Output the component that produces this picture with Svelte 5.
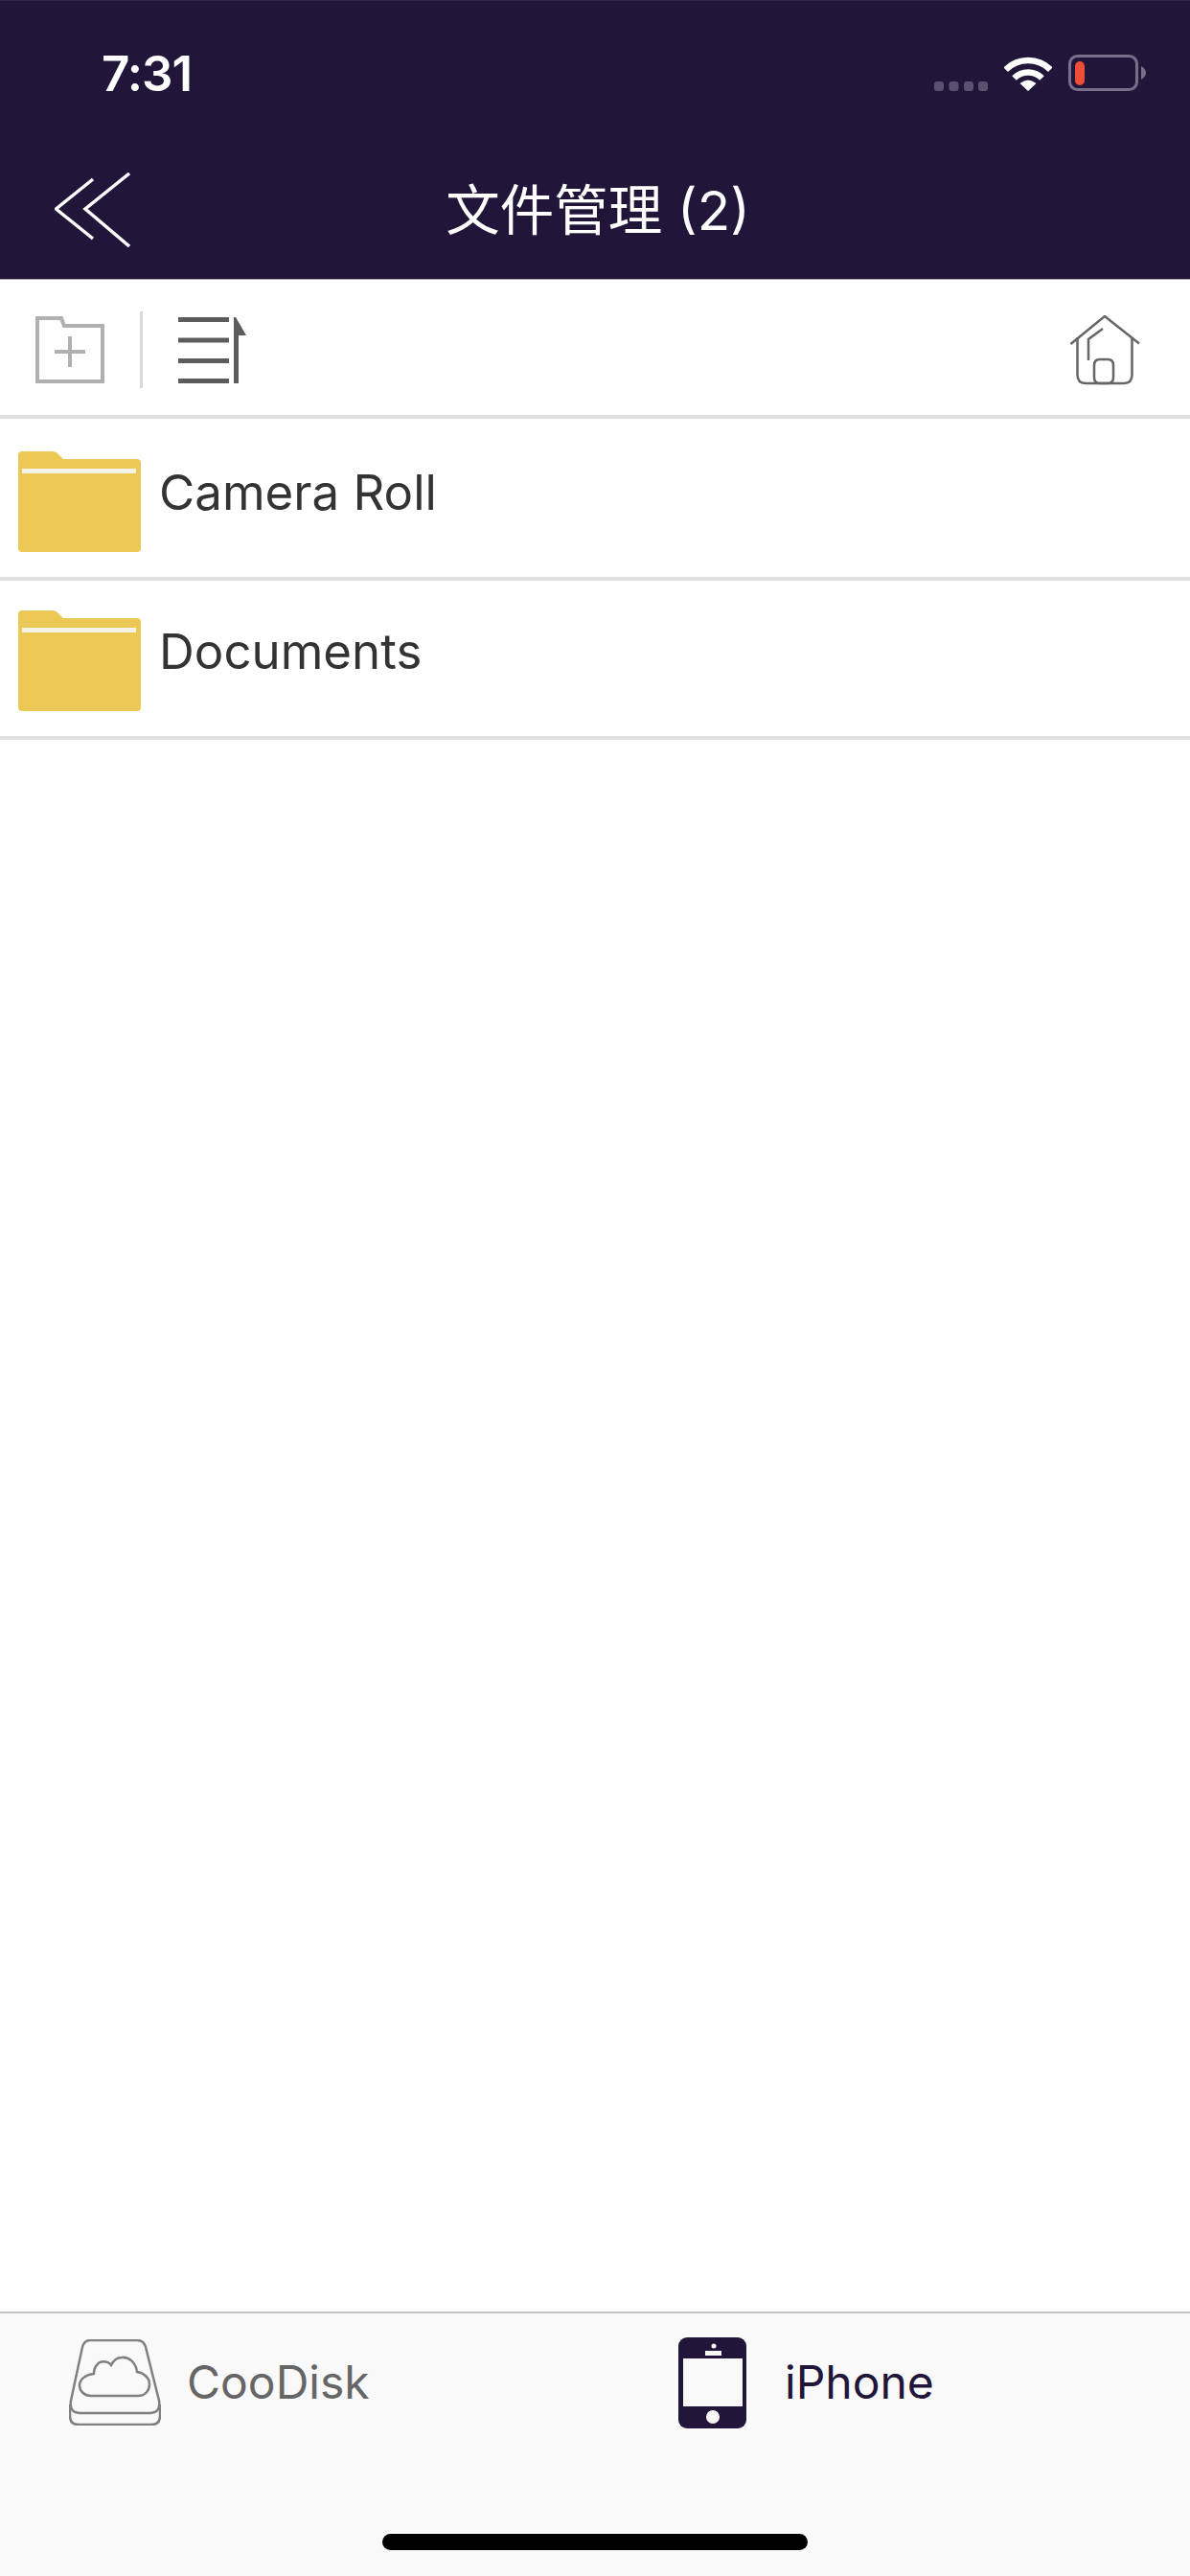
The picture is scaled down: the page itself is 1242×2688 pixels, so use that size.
<script>
    const folders = ['Camera Roll', 'Documents'];
</script>

<div class="screen">
    <!-- Dark header: status bar + nav -->
    <header class="header">
        <div class="status">
            <span class="time">7:31</span>
            <div class="status-icons">
                <svg class="dots" width="56" height="10" viewBox="0 0 56 10">
                    <rect x="0" width="10" height="10" rx="3" />
                    <rect x="15.500" width="10" height="10" rx="3" />
                    <rect x="31" width="10" height="10" rx="3" />
                    <rect x="46" width="10" height="10" rx="3" />
                </svg>
                <svg class="wifi" width="50" height="37" viewBox="0 0 50 37">
                    <path d="M1.700 14.700A33 33 0 0 1 48.300 14.700" fill="none" stroke="#fff" stroke-width="6.500" />
                    <path d="M10.500 23.500A20.500 20.500 0 0 1 39.500 23.500" fill="none" stroke="#fff" stroke-width="6.500" />
                    <path d="M25 37L16.500 29Q25 22 33.500 29Z" fill="#fff" />
                </svg>
                <svg width="81" height="38" viewBox="0 0 81 38">
                    <rect x="1.500" y="1.500" width="70" height="35" rx="8" fill="none" stroke="#77708a" stroke-width="3" />
                    <rect x="7" y="7" width="10" height="25" rx="5" fill="#ee4d38" />
                    <path d="M76 12Q81 15 81 19Q81 23 76 26Z" fill="#77708a" />
                </svg>
            </div>
        </div>
        <div class="nav">
            <svg class="back" width="80" height="78" viewBox="0 0 80 78">
                <path d="M40 7L1.500 38L40 69M78 1L32 38L78 77" fill="none" stroke="#fff" stroke-width="3.500" />
            </svg>
            <h1>文件管理 (2)</h1>
            <span></span>
        </div>
    </header>

    <!-- Toolbar -->
    <div class="toolbar">
        <svg width="72" height="70" viewBox="0 0 72 70">
            <path d="M2 2H27L30 10H70V68H2Z" fill="none" stroke="#b0b0b0" stroke-width="4" />
            <path d="M20 37H52M36 21V53" fill="none" stroke="#b0b0b0" stroke-width="4" />
        </svg>
        <div class="divider"></div>
        <svg width="71" height="69" viewBox="0 0 71 69">
            <path d="M0 2.500H53M0 24H53M0 45.500H53M0 66.500H53" fill="none" stroke="#5c5c5c" stroke-width="5" />
            <path d="M58 69V0H60L71 19H63V69Z" fill="#5c5c5c" />
        </svg>
        <svg class="home" width="73" height="73" viewBox="0 0 73 73">
            <g fill="none" stroke="#666" stroke-width="2.500">
                <path d="M0.500 30L36 1L72 29.500" />
                <path d="M7.500 23V62Q7.500 71 16 71H56Q64.500 71 64.500 62V23" />
                <path d="M34 14L19 25V47" />
                <path d="M25 65V52Q25 46 31 46H39Q45 46 45 52V65Q45 71 39 71H31Q25 71 25 65Z" />
            </g>
        </svg>
    </div>

    <!-- Folder list -->
    <ul class="list">
        {#each folders as name}
            <li class="row">
                <svg class="folder" width="128" height="105" viewBox="0 0 128 105">
                    <path d="M4 0H36Q39 0 41 2L47 8H124Q128 8 128 12V101Q128 105 124 105H4Q0 105 0 101V4Q0 0 4 0Z" fill="#ecc954" />
                    <rect x="4" y="18" width="119" height="5" fill="#f6f3e8" />
                </svg>
                <span class="name">{name}</span>
            </li>
        {/each}
    </ul>

    <!-- Bottom tabs -->
    <footer class="tabbar">
        <div class="tabs">
            <div class="tab tab-disk">
                <svg width="96" height="90" viewBox="0 0 96 90">
                    <g fill="none" stroke="#808080" stroke-width="2.500">
                        <path d="M22 1H71Q78 1 80 8L94 64Q96 77 84 77H12Q0 77 2 64L14 8Q16 1 22 1Z" />
                        <path d="M1 68V80Q1 89 10 89H86Q95 89 95 80V68" />
                        <path d="M23 59H72C80 59 84 53 84 47C84 40 78 35 71 34C70 24 62 18 55 19C50 19 46 23 44 27C40 22 32 22 29 27C26 30 26 33 26 36C17 37 11 42 11 48C11 54 16 59 23 59Z" />
                    </g>
                </svg>
                <span class="tab-label">CooDisk</span>
            </div>
            <div class="tab tab-phone">
                <svg width="71" height="95" viewBox="0 0 71 95">
                    <rect width="71" height="95" rx="9" fill="#21163a" />
                    <rect x="5" y="22" width="62" height="50" fill="#f9f9f9" />
                    <rect x="28" y="14" width="17" height="5" fill="#f9f9f9" />
                    <circle cx="37" cy="9" r="2.500" fill="#f9f9f9" />
                    <circle cx="36" cy="83" r="7" fill="#f9f9f9" />
                </svg>
                <span class="tab-label active">iPhone</span>
            </div>
        </div>
        <div class="home-bar"></div>
    </footer>
</div>

<style>
    :global(body) {
        margin: 0;
        background: #fff;
        font-family: Inter, "Noto Sans CJK SC", "Liberation Sans", sans-serif;
    }

    .screen {
        width: 1242px;
        height: 2688px;
        display: flex;
        flex-direction: column;
        overflow: hidden;
    }

    /* Header */
    .header {
        height: 290px;
        flex: none;
        background: #21163a;
        border-top: 1px solid #2f2548;
        border-bottom: 1px solid #a9a6b0;
        color: #fff;
    }

    .status {
        height: 150px;
        box-sizing: border-box;
        display: flex;
        align-items: center;
        justify-content: space-between;
        padding: 0 46px 0 106px;
    }

    .time {
        font-size: 51px;
        font-weight: 600;
        letter-spacing: -1px;
    }

    .status-icons {
        display: flex;
        align-items: center;
    }

    .dots {
        fill: #5a516e;
        margin: 27px 17px 0 0;
    }

    .wifi {
        margin-right: 17px;
    }

    .nav {
        height: 139px;
        display: grid;
        grid-template-columns: 1fr auto 1fr;
        align-items: center;
    }

    .back {
        margin: -4px 0 0 57px;
    }

    h1 {
        margin: -2px 0 0;
        padding-left: 6px;
        font-size: 56.5px;
        font-weight: 400;
        line-height: 1.2;
    }

    /* Toolbar */
    .toolbar {
        height: 145px;
        flex: none;
        box-sizing: border-box;
        display: flex;
        align-items: center;
        padding: 5px 52px 0 37px;
        border-bottom: 4px solid #e0e0e0;
    }

    .divider {
        width: 3px;
        height: 80px;
        background: #d8d8d8;
        margin: 0 37px;
    }

    .home {
        margin-left: auto;
    }

    /* List */
    .list {
        flex: 1;
        margin: 0;
        padding: 0;
        list-style: none;
    }

    .row {
        height: 166px;
        box-sizing: border-box;
        display: flex;
        align-items: flex-start;
        padding: 31px 0 0 19px;
        border-bottom: 4px solid #e0e0e0;
    }

    .row:first-child {
        height: 169px;
        padding-top: 34px;
    }

    .name {
        margin: 13px 0 0 19px;
        font-size: 51px;
        line-height: 60px;
        color: #333;
    }

    /* Tabs */
    .tabbar {
        height: 276px;
        flex: none;
        box-sizing: border-box;
        background: #f9f9f9;
        border-top: 2px solid #c4c4c4;
    }

    .tabs {
        height: 230px;
        display: flex;
    }

    .tab {
        width: 50%;
        box-sizing: border-box;
        display: flex;
        align-items: flex-start;
    }

    .tab-disk {
        padding: 27px 0 0 72px;
    }

    .tab-phone {
        padding: 25px 0 0 87px;
    }

    .tab-label {
        font-size: 48px;
        line-height: 58px;
        color: #666;
        margin: 16px 0 0 27px;
    }

    .tab-label.active {
        color: #21163a;
        margin-left: 40px;
        margin-top: 18px;
    }

    .home-bar {
        width: 444px;
        height: 17px;
        margin: 0 auto;
        border-radius: 9px;
        background: #000;
    }
</style>
